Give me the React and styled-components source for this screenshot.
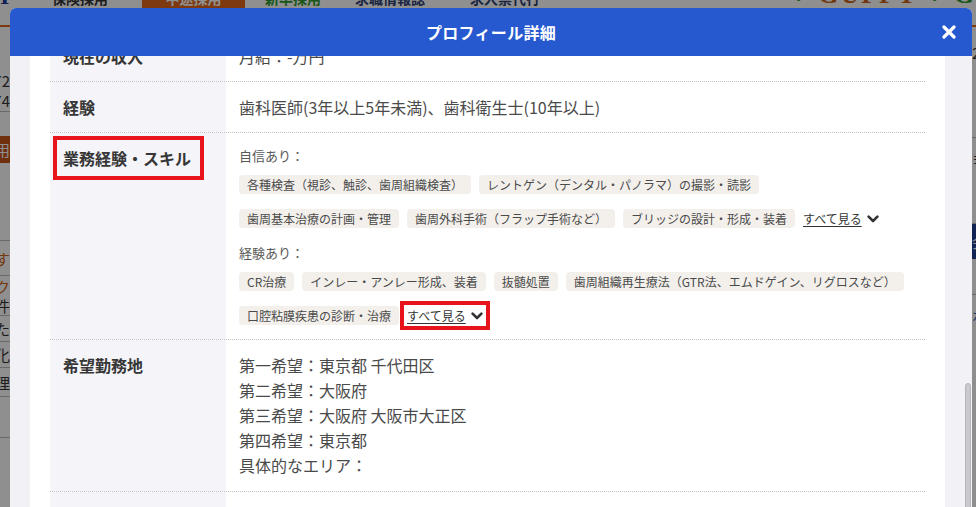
import React, { useLayoutEffect, useRef } from 'react';
import styled, { createGlobalStyle } from 'styled-components';

const GlobalStyle = createGlobalStyle`
  html, body {
    margin: 0;
    padding: 0;
  }
  body {
    font-family: 'Noto Sans CJK JP', 'Noto Sans', sans-serif;
    color: #333;
    background: #fff;
    overflow: hidden;
  }
`;

/* ---------- page behind the dialog ---------- */

const Page = styled.div`
  height: 100vh;
  overflow: hidden;
  background: #fff;
`;

const PageInner = styled.div`
  min-height: 160vh;
`;

const NavBar = styled.div`
  display: flex;
  align-items: flex-start;
  height: 42px;
  border-bottom: 2px solid #e0661c;
`;

const Brand = styled.div`
  width: 44px;
  flex: none;
  padding-top: 2px;
  font-family: 'Liberation Serif', serif;
  font-size: 24px;
  font-weight: bold;
  line-height: 22px;
  color: #1d3d9c;
`;

const NavItem = styled.div`
  width: ${(p) => p.$w}px;
  flex: none;
  height: 30px;
  box-sizing: border-box;
  padding: 7px 0 0 ${(p) => p.$pad || 0}px;
  background: ${(p) => p.$bg || 'transparent'};
  color: ${(p) => p.$color || '#333'};
  text-align: ${(p) => (p.$bg ? 'center' : 'left')};
  font-size: 14px;
  font-weight: bold;
  line-height: 16px;
`;

const Logo = styled.div`
  margin-left: auto;
  display: flex;
  gap: 10px;
  padding-top: 1px;
  font-family: 'Liberation Serif', serif;
  font-size: 26px;
  font-weight: bold;
  line-height: 22px;
  letter-spacing: 2px;
`;

const LogoWord = styled.span`
  color: ${(p) => p.$color};
  &::before {
    content: '✓';
    color: #2f9a2f;
    margin-right: 2px;
  }
`;

const PageBody = styled.div`
  display: flex;
  justify-content: space-between;
`;

const Sidebar = styled.div`
  width: ${(p) => p.$w}px;
  flex: none;
  overflow: hidden;
`;

const SideRow = styled.div`
  display: flex;
  justify-content: ${(p) => p.$align || 'flex-end'};
  height: ${(p) => p.$h}px;
  align-items: center;
  white-space: nowrap;
  font-size: 15px;
  color: ${(p) => p.$color || '#333'};
  background: ${(p) => p.$bg || 'transparent'};
  border-bottom: ${(p) => (p.$line ? '1px solid #bbb' : 'none')};
`;

const Dim = styled.div`
  position: fixed;
  inset: 0;
  background: rgba(0, 0, 0, 0.44);
  display: flex;
  padding: 8px 4px 0 10px;
`;

/* ---------- dialog ---------- */

const Modal = styled.div`
  flex: 1;
  display: flex;
  flex-direction: column;
  border-radius: 6px 6px 0 0;
  overflow: hidden;
  background: #f1f1f6;
`;

const Header = styled.div`
  height: 48px;
  flex: none;
  display: grid;
  grid-template-columns: 1fr auto 1fr;
  align-items: center;
  background: #2659cf;
  color: #fff;
`;

const Title = styled.h2`
  grid-column: 2;
  margin: 0;
  font-size: 16px;
  font-weight: bold;
  letter-spacing: 0.3px;
`;

const CloseButton = styled.button`
  justify-self: end;
  margin-right: 16px;
  padding: 0;
  width: 14px;
  height: 14px;
  border: 0;
  background: none;
  display: flex;
  cursor: pointer;
`;

const Body = styled.div`
  position: relative;
  flex: 1;
  min-height: 0;
  display: flex;
  padding: 0 27px 0 20px;
`;

const Panel = styled.div`
  flex: 1;
  background: #fff;
  padding: 0 20px;
  overflow-y: auto;
  scrollbar-width: none;
  &::-webkit-scrollbar {
    display: none;
  }
`;

const ScrollThumb = styled.div`
  position: absolute;
  right: 1px;
  top: 327px;
  width: 6px;
  height: 240px;
  box-sizing: border-box;
  border: 1px solid #b7b7bd;
  border-radius: 3px;
  background: #cacace;
`;

const Row = styled.div`
  display: grid;
  grid-template-columns: 176px 1fr;
  border-bottom: 1px dotted #c2c2c2;
`;

const Label = styled.div`
  background: #f4f4f9;
  padding: 13px 12px 13px 13px;
  font-size: 16px;
  font-weight: bold;
  line-height: 24px;
  color: #363636;
`;

const Marked = styled.span`
  display: inline-block;
  padding-right: 3px;
  outline: 4px solid #e8141c;
  outline-offset: 6px;
`;

const Value = styled.div`
  padding: 13px 13px ${(p) => (p.$tags ? 14 : 13)}px;
  font-size: 16px;
  line-height: ${(p) => p.$lh || 24}px;
  color: #4a4a4a;
`;

const SubHead = styled.div`
  font-size: 13px;
  line-height: 20px;
  color: #595959;
  margin-top: ${(p) => (p.$first ? 0 : 15)}px;
`;

const TagList = styled.div`
  display: flex;
  flex-wrap: wrap;
  align-items: center;
  gap: 15px 8px;
  margin-top: 9px;
`;

const Tag = styled.span`
  display: inline-flex;
  align-items: center;
  height: 19px;
  padding: 0 8px;
  border-radius: 4px;
  background: #f3f0ec;
  font-size: 12px;
  color: #4a4a4a;
  white-space: nowrap;
`;

const MoreLink = styled.a`
  display: inline-flex;
  align-items: center;
  gap: 5px;
  height: 19px;
  padding: 0 2px;
  margin: 0 -2px;
  font-size: 12px;
  color: #333;
  cursor: pointer;
  outline: ${(p) => (p.$marked ? '4px solid #e8141c' : 'none')};
  outline-offset: 1px;

  span {
    text-decoration: underline;
    text-underline-offset: 2px;
  }
`;

const Chevron = () => (
  <svg width="12" height="8" viewBox="0 0 12 8">
    <path d="M1.6 1.6 L6 6 L10.4 1.6" fill="none" stroke="#333" strokeWidth="2.6" strokeLinecap="round" strokeLinejoin="round" />
  </svg>
);

const CloseIcon = () => (
  <svg width="14" height="14" viewBox="0 0 14 14">
    <path d="M2 2 L12 12 M12 2 L2 12" stroke="#fff" strokeWidth="3.2" strokeLinecap="round" />
  </svg>
);

const confident = [
  '各種検査（視診、触診、歯周組織検査）',
  'レントゲン（デンタル・パノラマ）の撮影・読影',
  '歯周基本治療の計画・管理',
  '歯周外科手術（フラップ手術など）',
  'ブリッジの設計・形成・装着',
];

const experienced = [
  'CR治療',
  'インレー・アンレー形成、装着',
  '抜髄処置',
  '歯周組織再生療法（GTR法、エムドゲイン、リグロスなど）',
  '口腔粘膜疾患の診断・治療',
];

const areas = [
  '第一希望：東京都 千代田区',
  '第二希望：大阪府',
  '第三希望：大阪府 大阪市大正区',
  '第四希望：東京都',
  '具体的なエリア：',
];

const leftRows = [
  { h: 43 },
  { h: 20, text: '〒272' },
  { h: 21, text: '074', line: true },
  { h: 24 },
  { h: 27, text: '採用', color: '#fff', bg: '#c8561a' },
  { h: 77, line: true },
  { h: 34, text: 'です', color: '#d2661c', line: true },
  { h: 20, text: 'ブック', color: '#d2661c' },
  { h: 19, text: '条件', line: true },
  { h: 25, text: 'した', line: true },
  { h: 25, text: '文化', line: true },
  { h: 28, text: '管理', line: true },
  { h: 40, line: true },
];

const rightRows = [
  { h: 50, text: '2' },
  { h: 60, line: true },
  { h: 40, text: '≡' },
  { h: 45, line: true },
  { h: 35, text: '会', color: '#fff', bg: '#1f3f96' },
  { h: 35, line: true },
  { h: 40, text: 'ホ', color: '#2a5bb0' },
];

const SkillGroup = ({ title, first, items, marked }) => (
  <>
    <SubHead $first={first}>{title}</SubHead>
    <TagList>
      {items.map((t) => (
        <Tag key={t}>{t}</Tag>
      ))}
      <MoreLink $marked={marked}>
        <span>すべて見る</span>
        <Chevron />
      </MoreLink>
    </TagList>
  </>
);

export default function App() {
  const pageRef = useRef(null);
  const panelRef = useRef(null);

  useLayoutEffect(() => {
    if (pageRef.current) pageRef.current.scrollTop = 17;
    if (panelRef.current) panelRef.current.scrollTop = 25;
  }, []);

  return (
    <>
      <GlobalStyle />
      <Page ref={pageRef}>
        <PageInner>
          <NavBar>
            <Brand>I</Brand>
            <NavItem $w={98} $pad={8}>保険採用</NavItem>
            <NavItem $w={103} $bg="#e0661c" $color="#fff">中途採用</NavItem>
            <NavItem $w={110} $pad={20} $color="#2f9a2f">新卒採用</NavItem>
            <NavItem $w={115} $pad={0} $color="#2e3f73">求職情報誌</NavItem>
            <NavItem $w={100} $pad={0} $color="#2e3f73">求人票代行</NavItem>
            <Logo>
              <LogoWord $color="#c9651d">GUPPY</LogoWord>
              <LogoWord $color="#2f9a2f">G</LogoWord>
            </Logo>
          </NavBar>
          <PageBody>
            <Sidebar $w={10}>
              {leftRows.map((r, i) => (
                <SideRow key={i} $h={r.h} $color={r.color} $bg={r.bg} $line={r.line}>
                  {r.text}
                </SideRow>
              ))}
            </Sidebar>
            <Sidebar $w={4}>
              {rightRows.map((r, i) => (
                <SideRow key={i} $h={r.h} $align="flex-start" $color={r.color} $bg={r.bg} $line={r.line}>
                  {r.text}
                </SideRow>
              ))}
            </Sidebar>
          </PageBody>
        </PageInner>
      </Page>

      <Dim>
        <Modal>
          <Header>
            <Title>プロフィール詳細</Title>
            <CloseButton aria-label="閉じる">
              <CloseIcon />
            </CloseButton>
          </Header>
          <Body>
            <Panel ref={panelRef}>
              <Row>
                <Label>現在の収入</Label>
                <Value>月給：-万円</Value>
              </Row>
              <Row>
                <Label>経験</Label>
                <Value>歯科医師(3年以上5年未満)、歯科衛生士(10年以上)</Value>
              </Row>
              <Row>
                <Label>
                  <Marked>業務経験・スキル</Marked>
                </Label>
                <Value $tags>
                  <SkillGroup title="自信あり：" first items={confident} />
                  <SkillGroup title="経験あり：" items={experienced} marked />
                </Value>
              </Row>
              <Row>
                <Label>希望勤務地</Label>
                <Value $lh={25}>
                  {areas.map((a) => (
                    <div key={a}>{a}</div>
                  ))}
                </Value>
              </Row>
              <Row>
                <Label>希望雇用形態</Label>
                <Value>常勤（正社員）</Value>
              </Row>
              <Row>
                <Label>希望年収</Label>
                <Value>応相談</Value>
              </Row>
            </Panel>
            <ScrollThumb />
          </Body>
        </Modal>
      </Dim>
    </>
  );
}
